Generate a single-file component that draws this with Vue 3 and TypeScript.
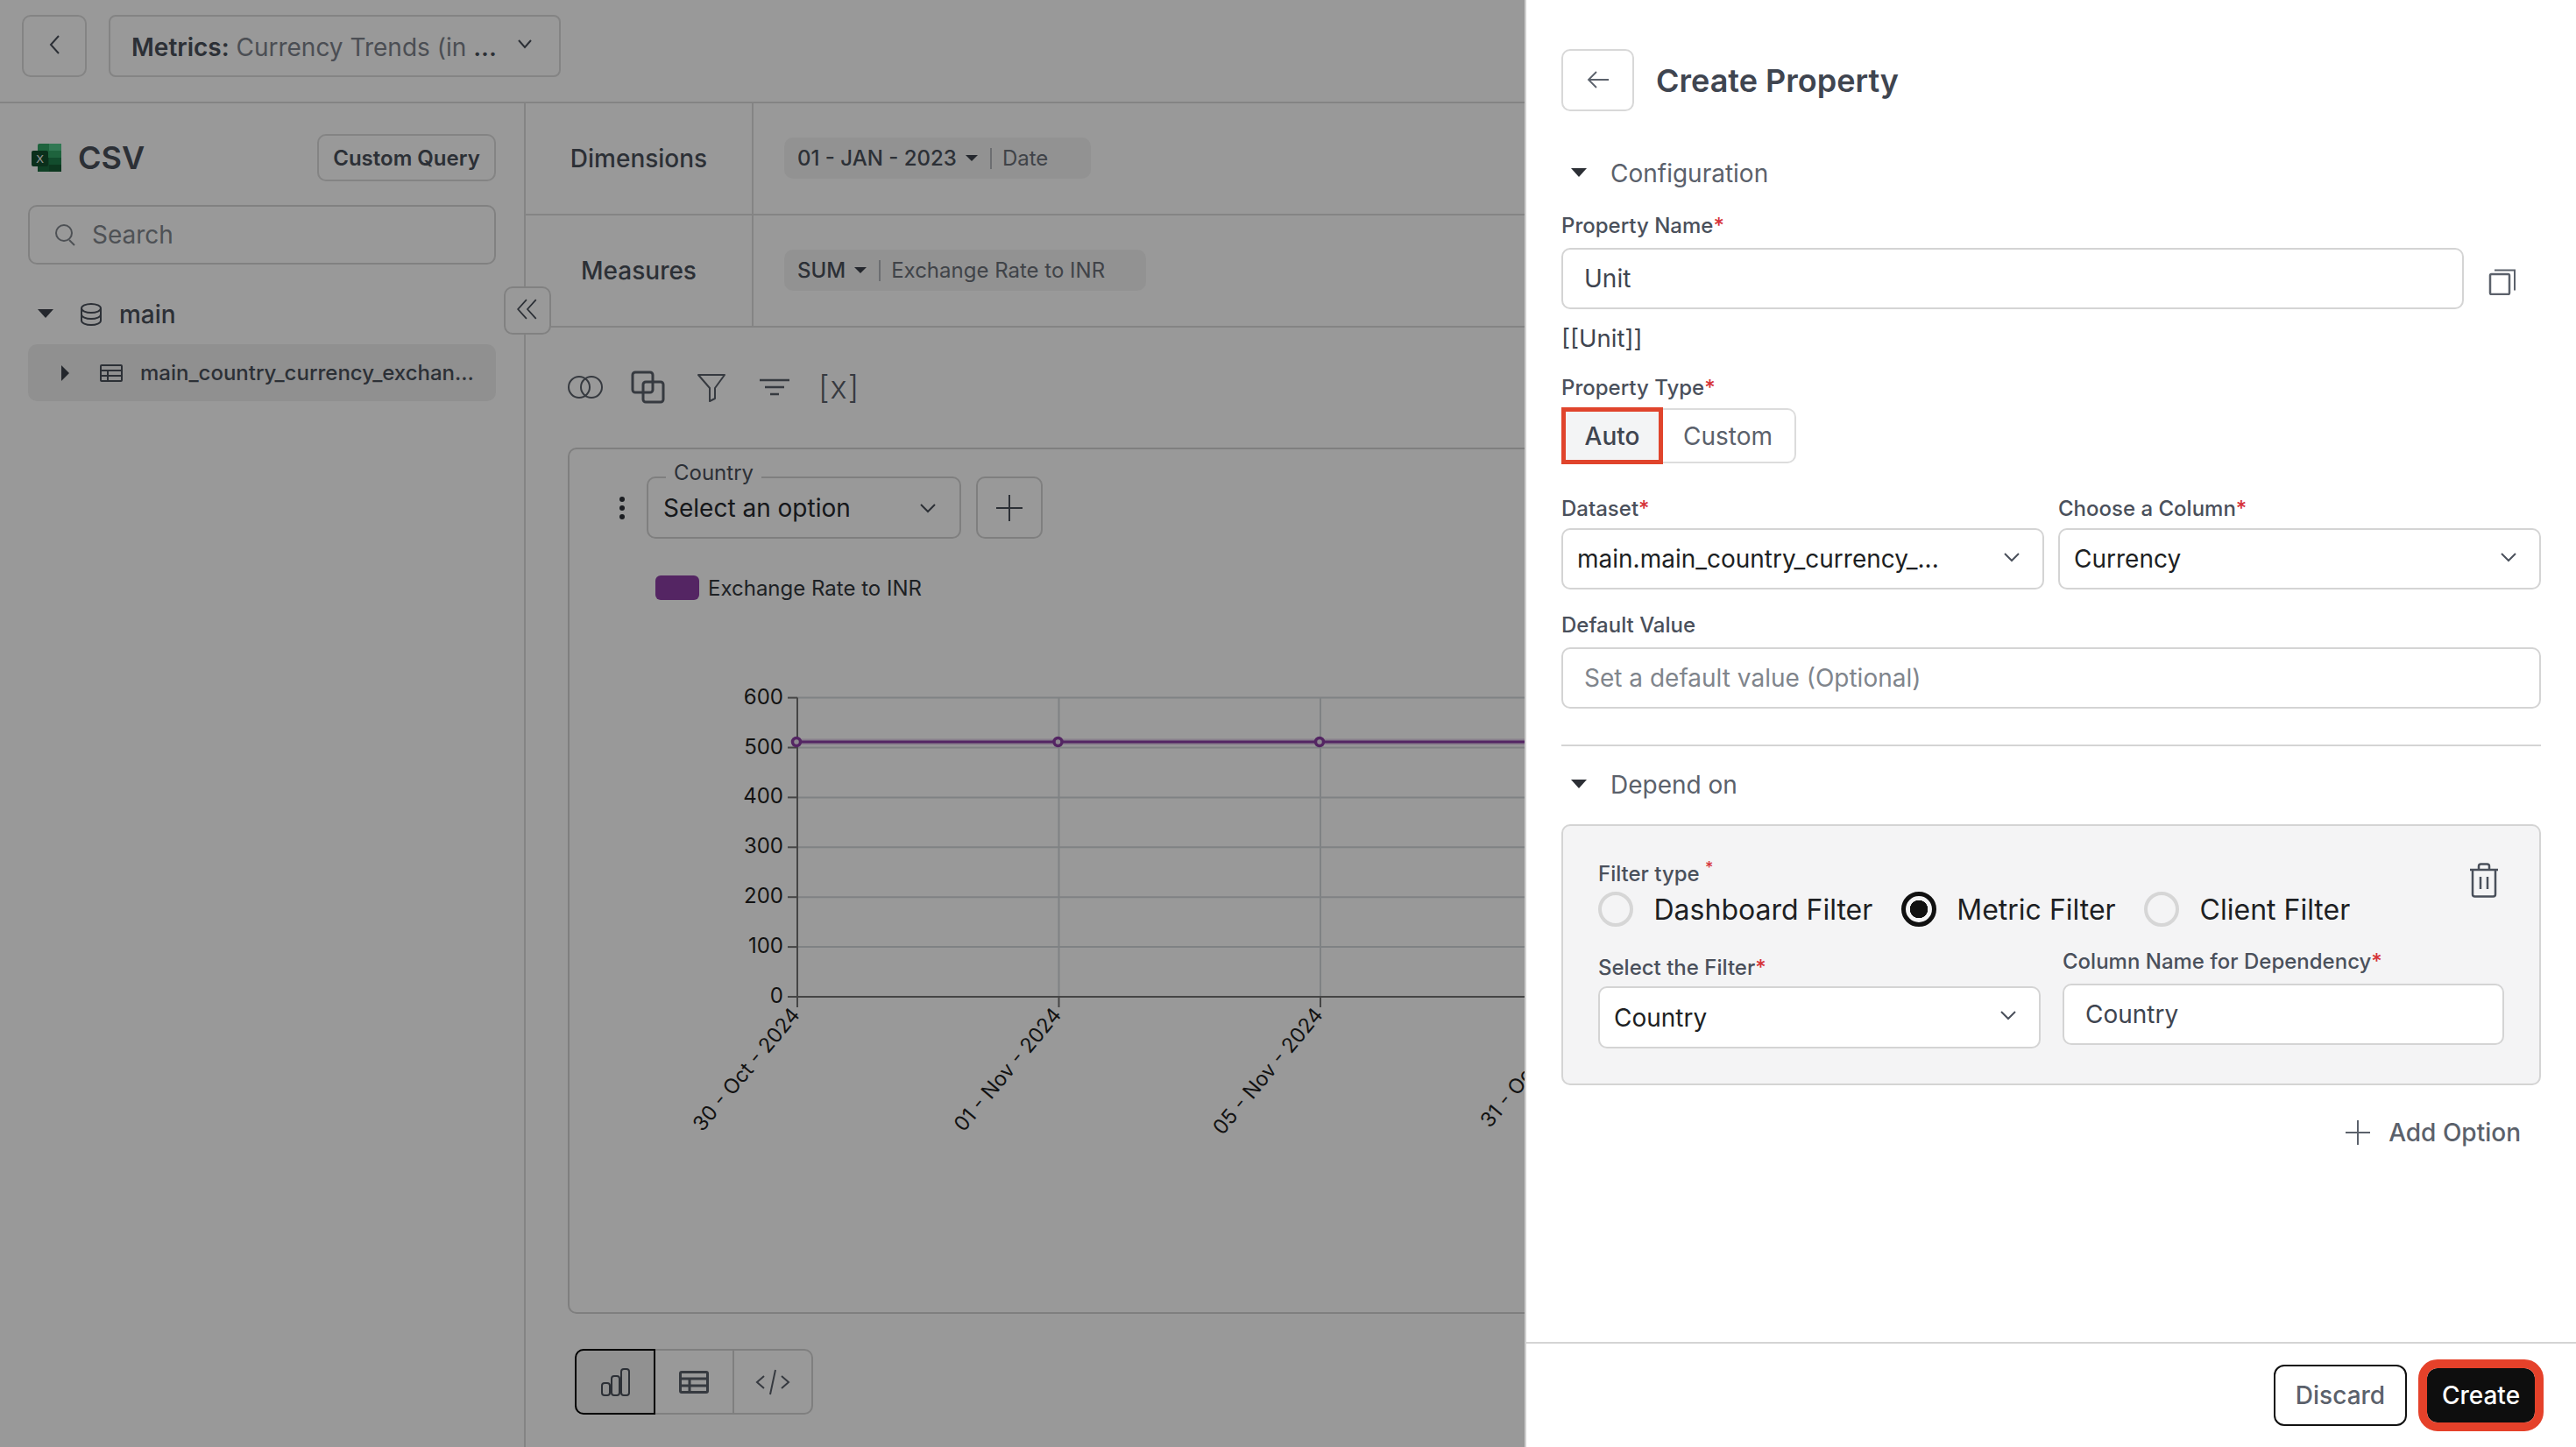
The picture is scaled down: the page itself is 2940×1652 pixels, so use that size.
<template>
  <div class="screen">
    <!-- page behind the drawer -->
    <div class="page">
      <header class="topbar">
        <button class="back-btn">
          <svg width="14" height="26" viewBox="0 0 14 26"><path d="M12 3 3 13l9 10" class="ln" stroke-width="2" /></svg>
        </button>
        <div class="metric-select">
          <span class="metric-text"><b>Metrics:</b> Currency Trends (in <b>...</b></span>
          <svg width="18" height="12" viewBox="0 0 18 12"><path d="m2 2 7 8 7-8" class="ln" stroke-width="2" /></svg>
        </div>
      </header>

      <div class="workspace">
        <aside class="sidebar">
          <div class="source-row">
            <div class="source-name">
              <svg width="34" height="32" viewBox="0 0 34 32">
                <rect x="7" y="0" width="27" height="32" rx="2" fill="#33a566" />
                <rect x="20" y="0" width="14" height="8" fill="#52c98a" />
                <rect x="20" y="8" width="14" height="8" fill="#33a566" />
                <rect x="20" y="16" width="14" height="8" fill="#1f7f4b" />
                <rect x="7" y="16" width="13" height="16" fill="#1a6b3f" />
                <rect x="20" y="24" width="14" height="8" fill="#155c35" />
                <rect x="0" y="8" width="19" height="18" rx="2" fill="#124f2e" />
                <text x="9.5" y="22" text-anchor="middle" class="xl-x">X</text>
              </svg>
              <span class="csv">CSV</span>
            </div>
            <button class="query-btn">Custom Query</button>
          </div>
          <div class="search">
            <svg width="26" height="28" viewBox="0 0 26 28"><circle cx="11" cy="12" r="9" class="ln" stroke-width="2" /><path d="m17 20 6 6" class="ln" stroke-width="2" /></svg>
            <span>Search</span>
          </div>
          <div class="tree-main">
            <i class="caret-down" />
            <svg width="26" height="26" viewBox="0 0 26 26">
              <ellipse cx="13" cy="6" rx="11" ry="5" class="ln" stroke-width="2" />
              <path d="M2 6v14c0 2.800 5 5 11 5s11-2.200 11-5V6M2 13c0 2.800 5 5 11 5s11-2.200 11-5" class="ln" stroke-width="2" />
            </svg>
            <span>main</span>
          </div>
          <div class="tree-table">
            <i class="caret-right" />
            <svg width="26" height="20" viewBox="0 0 26 20">
              <rect x="1" y="1" width="24" height="18" rx="1" class="ln" stroke-width="2" />
              <path d="M1 7h24M1 13h24M9 7v12" class="ln" stroke-width="2" />
            </svg>
            <span>main_country_currency_exchan...</span>
          </div>
        </aside>

        <button class="collapse-btn">
          <svg width="28" height="26" viewBox="0 0 24 24"><path d="M11 2 2 12l9 10M21 2l-9 10 9 10" class="ln" stroke-width="1.600" /></svg>
        </button>

        <main class="content">
          <div class="config-row">
            <div class="config-label">Dimensions</div>
            <div class="config-body">
              <div class="pill pill--date">
                <span class="pill-key">01 - JAN - 2023</span>
                <i class="pill-caret" />
                <span class="pill-sep" />
                <span class="pill-val">Date</span>
              </div>
            </div>
          </div>
          <div class="config-row">
            <div class="config-label">Measures</div>
            <div class="config-body">
              <div class="pill pill--sum">
                <span class="pill-key">SUM</span>
                <i class="pill-caret" />
                <span class="pill-sep" />
                <span class="pill-val">Exchange Rate to INR</span>
              </div>
            </div>
          </div>

          <div class="toolbar">
            <svg width="44" height="36" viewBox="0 0 44 36"><circle cx="15" cy="18" r="12" class="ln" stroke-width="2" /><circle cx="29" cy="18" r="12" class="ln" stroke-width="2" /></svg>
            <svg width="44" height="38" viewBox="0 0 44 38"><rect x="4" y="2" width="23" height="23" rx="3" class="ln" stroke-width="3" /><rect x="16" y="13" width="23" height="23" rx="3" class="ln" stroke-width="3" /></svg>
            <svg width="44" height="36" viewBox="0 0 44 36"><path d="M7 4h30L26 19v12l-6 3V19z" class="ln" stroke-width="2" stroke-linejoin="round" /></svg>
            <svg width="44" height="36" viewBox="0 0 44 36"><path d="M5 10h34M11 18h22M17 26h10" class="ln" stroke-width="2.500" /></svg>
            <span class="var-icon">[x]</span>
          </div>

          <section class="chart-card">
            <div class="filter-row">
              <svg class="dots" width="8" height="28" viewBox="0 0 8 28"><circle cx="4" cy="4" r="3" /><circle cx="4" cy="14" r="3" /><circle cx="4" cy="24" r="3" /></svg>
              <div class="filter-select">
                <span class="filter-legend">Country</span>
                <span>Select an option</span>
                <svg width="20" height="12" viewBox="0 0 20 12"><path d="m2 2 8 8 8-8" class="ln" stroke-width="2" /></svg>
              </div>
              <button class="plus-btn">
                <svg width="30" height="30" viewBox="0 0 30 30"><path d="M15 0v30M0 15h30" class="ln" stroke-width="2" /></svg>
              </button>
            </div>
            <div class="legend"><i class="legend-swatch" /><span>Exchange Rate to INR</span></div>
            <svg class="chart" width="1300" height="620" viewBox="0 0 1300 620">
              <g v-for="t in yTicks" :key="t.label">
                <line v-if="t.label !== '0'" :x1="axisX" :x2="1300" :y1="t.y" :y2="t.y" class="grid" />
                <line :x1="axisX - 11" :x2="axisX" :y1="t.y" :y2="t.y" class="axis" />
                <text :x="axisX - 16" :y="t.y + 7" text-anchor="end" class="tick">{{ t.label }}</text>
              </g>
              <g v-for="t in xTicks" :key="t.label">
                <line v-if="t.x !== axisX" :x1="t.x" :x2="t.x" :y1="axisTop" :y2="axisBottom" class="grid" />
                <line :x1="t.x" :x2="t.x" :y1="axisBottom" :y2="axisBottom + 12" class="axis" />
                <text :x="t.x + 4" :y="axisBottom + 21" text-anchor="end" class="tick tick--x" :transform="`rotate(-50 ${t.x + 4} ${axisBottom + 21})`">{{ t.label }}</text>
              </g>
              <line :x1="axisX" :x2="axisX" :y1="axisTop" :y2="axisBottom" class="axis" />
              <line :x1="axisX" :x2="1300" :y1="axisBottom" :y2="axisBottom" class="axis" />
              <line :x1="axisX" :x2="1300" :y1="lineY" :y2="lineY" class="series-halo" />
              <line :x1="axisX" :x2="1300" :y1="lineY" :y2="lineY" class="series" />
              <circle v-for="t in xTicks" :key="t.label" :cx="t.x - 1" :cy="lineY" r="4.500" class="marker" />
            </svg>
          </section>

          <div class="view-toggle">
            <button class="view-btn view-btn--active">
              <svg width="34" height="32" viewBox="0 0 34 32">
                <rect x="2" y="17" width="9" height="14" rx="3" class="ln" stroke-width="2" />
                <rect x="13" y="9" width="9" height="22" rx="3" class="ln" stroke-width="2" />
                <rect x="24" y="1" width="9" height="30" rx="3" class="ln" stroke-width="2" />
              </svg>
            </button>
            <button class="view-btn">
              <svg width="34" height="26" viewBox="0 0 34 26">
                <rect x="1.500" y="1.500" width="31" height="23" rx="1.500" class="ln" stroke-width="3" />
                <path d="M1 9h32M1 17h32M12 9v16" class="ln" stroke-width="3" />
              </svg>
            </button>
            <button class="view-btn">
              <svg width="40" height="32" viewBox="0 0 40 32"><path d="m10 9-8 7 8 7M30 9l8 7-8 7M23 2l-6 28" class="ln" stroke-width="2" /></svg>
            </button>
          </div>
        </main>
      </div>
    </div>

    <div class="dim" />

    <!-- drawer -->
    <aside class="drawer">
      <div class="drawer-body">
        <div class="drawer-head">
          <button class="drawer-back">
            <svg width="26" height="20" viewBox="0 0 26 20"><path d="M11 1 2 10l9 9M2 10h23" class="ln" stroke-width="1.800" /></svg>
          </button>
          <h1>Create Property</h1>
        </div>

        <div class="section-title section-title--first"><i class="section-caret" />Configuration</div>

        <label class="lbl lbl--name">Property Name<em>*</em></label>
        <div class="name-row">
          <div class="box name-input">Unit</div>
          <svg width="32" height="30" viewBox="0 0 32 30">
            <rect x="2" y="6" width="22" height="23" rx="1.500" class="ln" stroke-width="2.500" />
            <path d="M7 1.500h23v23" class="ln" stroke-width="2" />
          </svg>
        </div>
        <div class="token">[[Unit]]</div>

        <label class="lbl lbl--type">Property Type<em>*</em></label>
        <div class="type-toggle">
          <span class="type-auto">Auto</span>
          <span class="type-custom">Custom</span>
        </div>

        <div class="two-col">
          <div class="col">
            <label class="lbl">Dataset<em>*</em></label>
            <div class="box select"><span>main.main_country_currency_...</span><svg width="20" height="12" viewBox="0 0 20 12"><path d="m2 2 8 8 8-8" class="ln" stroke-width="2" /></svg></div>
          </div>
          <div class="col">
            <label class="lbl">Choose a Column<em>*</em></label>
            <div class="box select"><span>Currency</span><svg width="20" height="12" viewBox="0 0 20 12"><path d="m2 2 8 8 8-8" class="ln" stroke-width="2" /></svg></div>
          </div>
        </div>

        <label class="lbl lbl--default">Default Value</label>
        <div class="box placeholder">Set a default value (Optional)</div>

        <div class="divider" />

        <div class="section-title section-title--depend"><i class="section-caret" />Depend on</div>

        <div class="depend-card">
          <div class="depend-top">
            <div>
              <div class="lbl">Filter type <sup>*</sup></div>
              <div class="radios">
                <template v-for="r in radioOptions" :key="r.label">
                  <span class="radio" :class="{ 'radio--on': r.on }" />
                  <span class="radio-text">{{ r.label }}</span>
                </template>
              </div>
            </div>
            <svg class="trash" width="36" height="40" viewBox="0 0 36 40">
              <path d="M2 8h32M12 8V4c0-1.500 1-2.500 2.500-2.500h7C23 1.500 24 2.500 24 4v4M5 8v28c0 1.500 1 2.500 2.500 2.500h21c1.500 0 2.500-1 2.500-2.500V8M14 16v14M22 16v14" class="ln" stroke-width="2.500" />
            </svg>
          </div>
          <div class="depend-fields">
            <div class="col-filter">
              <label class="lbl">Select the Filter<em>*</em></label>
              <div class="box select select--filter"><span>Country</span><svg width="20" height="12" viewBox="0 0 20 12"><path d="m2 2 8 8 8-8" class="ln" stroke-width="2" /></svg></div>
            </div>
            <div class="col-column">
              <label class="lbl">Column Name for Dependency<em>*</em></label>
              <div class="box column-input">Country</div>
            </div>
          </div>
        </div>

        <div class="add-option">
          <svg width="28" height="28" viewBox="0 0 28 28"><path d="M14 0v28M0 14h28" class="ln" stroke-width="2" /></svg>
          <span>Add Option</span>
        </div>
      </div>

      <footer class="drawer-foot">
        <button class="btn-discard">Discard</button>
        <button class="btn-create">Create</button>
      </footer>
    </aside>
  </div>
</template>

<script setup lang="ts">
const axisX = 260
const axisTop = 98.6
const axisBottom = 440
const lineY = 149

const yTicks = ['0', '100', '200', '300', '400', '500', '600'].map((label, i) => ({
  label,
  y: axisBottom - i * 56.9,
}))

const xTicks = ['30 - Oct - 2024', '01 - Nov - 2024', '05 - Nov - 2024', '31 - Oct - 2024'].map((label, i) => ({
  label,
  x: axisX + i * 298.5,
}))

const radioOptions = [
  { label: 'Dashboard Filter', on: false },
  { label: 'Metric Filter', on: true },
  { label: 'Client Filter', on: false },
]
</script>

<style>
html,
body {
  margin: 0;
  background: #fff;
}
</style>

<style scoped>
.screen {
  position: relative;
  width: 2940px;
  height: 1652px;
  overflow: hidden;
  background: #fff;
  font-family: Inter, "Liberation Sans", sans-serif;
  color: #4a505b;
}

button {
  font-family: inherit;
  padding: 0;
  cursor: pointer;
  background: transparent;
}

.ln {
  fill: none;
  stroke: currentColor;
}

.dim {
  position: absolute;
  inset: 0;
  background: rgba(0, 0, 0, 0.4);
}

.page {
  width: 2940px;
}

.topbar {
  height: 116px;
  box-sizing: content-box;
  border-bottom: 2px solid #dcdcdc;
  display: flex;
  align-items: flex-start;
  gap: 25px;
  padding: 0 0 0 25px;
}

.topbar > * {
  margin-top: 17px;
}

.back-btn {
  width: 74px;
  height: 71px;
  border: 2px solid #dcdcdc;
  border-radius: 10px;
  color: #4a505b;
}

.metric-select {
  width: 516px;
  height: 71px;
  box-sizing: border-box;
  border: 2px solid #dcdcdc;
  border-radius: 8px;
  display: flex;
  align-items: center;
  justify-content: space-between;
  padding: 2px 30px 0 24px;
  font-size: 28px;
  color: #7d838c;
}

.metric-text {
  white-space: nowrap;
}

.metric-text b {
  font-weight: 600;
  color: #4a505b;
}

.metric-select svg {
  color: #4a505b;
  margin-top: -8px;
}

.workspace {
  position: relative;
  display: flex;
  height: 1534px;
}

.sidebar {
  width: 600px;
  box-sizing: border-box;
  border-right: 2px solid #dcdcdc;
  padding: 35px 32px 0 32px;
}

.source-row {
  display: flex;
  justify-content: space-between;
  align-items: center;
  height: 54px;
}

.source-name {
  display: flex;
  align-items: center;
  gap: 19px;
  padding-left: 4px;
}

.xl-x {
  font-size: 13px;
  font-family: "Liberation Sans", sans-serif;
  fill: #fff;
}

.csv {
  font-size: 36px;
  font-weight: 600;
  color: #4a505b;
}

.query-btn {
  width: 204px;
  height: 54px;
  border: 2px solid #dcdcdc;
  border-radius: 10px;
  font-size: 24px;
  font-weight: 600;
  color: #4a505b;
}

.search {
  margin-top: 27px;
  height: 68px;
  box-sizing: border-box;
  border: 2px solid #d8d8d8;
  border-radius: 10px;
  display: flex;
  align-items: center;
  gap: 17px;
  padding-left: 28px;
  font-size: 28px;
  color: #82878e;
}

.tree-main {
  margin-top: 32px;
  height: 50px;
  display: flex;
  align-items: center;
  font-size: 28px;
  font-weight: 500;
  color: #4a505b;
}

.caret-down {
  width: 0;
  height: 0;
  border-left: 9px solid transparent;
  border-right: 9px solid transparent;
  border-top: 10px solid #3d424b;
  margin: -2px 30px 0 11px;
}

.tree-main span {
  margin-left: 19px;
}

.tree-table {
  margin-top: 9px;
  height: 65px;
  border-radius: 10px;
  background: #f1f1f1;
  display: flex;
  align-items: center;
  font-size: 24px;
  font-weight: 500;
  color: #4a505b;
  white-space: nowrap;
}

.caret-right {
  width: 0;
  height: 0;
  border-top: 9px solid transparent;
  border-bottom: 9px solid transparent;
  border-left: 9px solid #3d424b;
  margin: 0 35px 0 38px;
}

.tree-table span {
  margin-left: 20px;
}

.collapse-btn {
  position: absolute;
  left: 575px;
  top: 209px;
  width: 54px;
  height: 55px;
  border: 2px solid #d8d8d8;
  border-radius: 10px;
  background: #fff;
  color: #4a505b;
}

.content {
  flex: 1;
  min-width: 0;
}

.config-row {
  display: flex;
  height: 128px;
  box-sizing: border-box;
  border-bottom: 2px solid #dcdcdc;
}

.config-label {
  width: 260px;
  box-sizing: border-box;
  border-right: 2px solid #dcdcdc;
  display: flex;
  align-items: center;
  justify-content: center;
  font-size: 28px;
  font-weight: 500;
  color: #4a505b;
}

.config-body {
  flex: 1;
  display: flex;
  align-items: center;
  padding: 0 0 1px 35px;
}

.pill {
  height: 47px;
  padding: 0 0 0 15px;
  border-radius: 10px;
  background: #f4f4f4;
  display: flex;
  align-items: center;
  font-size: 24px;
  color: #6b7079;
}

.pill--date {
  padding-right: 49px;
}

.pill--sum {
  padding-right: 47px;
}

.pill-key {
  font-weight: 500;
  color: #4a505b;
}

.pill-caret {
  width: 0;
  height: 0;
  border-left: 7px solid transparent;
  border-right: 7px solid transparent;
  border-top: 7px solid #3d424b;
  margin: 0 14px 0 10px;
}

.pill-sep {
  width: 2px;
  height: 24px;
  background: #b5b8bc;
  margin-right: 12px;
}

.toolbar {
  height: 137px;
  display: flex;
  align-items: center;
  gap: 28px;
  padding: 0 0 1px 46px;
  box-sizing: border-box;
  color: #5b616b;
}

.var-icon {
  width: 44px;
  text-align: center;
  font-size: 36px;
  font-weight: 300;
  letter-spacing: 1px;
  white-space: nowrap;
  color: #5b616b;
}

.chart-card {
  margin-left: 48px;
  width: 2200px;
  height: 989px;
  box-sizing: border-box;
  border: 2px solid #d4d4d4;
  border-radius: 10px;
  padding-top: 31px;
}

.filter-row {
  display: flex;
  align-items: center;
  padding-left: 56px;
}

.dots {
  fill: #2d3138;
  margin-right: 24px;
}

.filter-select {
  position: relative;
  width: 359px;
  height: 71px;
  box-sizing: border-box;
  border: 2px solid #d4d4d4;
  border-radius: 10px;
  display: flex;
  align-items: center;
  justify-content: space-between;
  padding: 0 26px 0 17px;
  font-size: 28px;
  color: #25282d;
}

.filter-select svg {
  color: #4a505b;
}

.filter-legend {
  position: absolute;
  left: 20px;
  top: -19px;
  padding: 0 9px;
  background: #fff;
  font-size: 24px;
  line-height: 26px;
  color: #4a505b;
}

.plus-btn {
  width: 76px;
  height: 71px;
  margin-left: 17px;
  border: 2px solid #d4d4d4;
  border-radius: 10px;
  color: #4a505b;
  display: flex;
  align-items: center;
  justify-content: center;
}

.legend {
  margin: 42px 0 0 98px;
  display: flex;
  align-items: center;
  gap: 10px;
  font-size: 24px;
  color: #33373d;
  height: 28px;
}

.legend-swatch {
  width: 50px;
  height: 28px;
  border-radius: 6px;
  background: #8c3fa6;
}

.chart {
  display: block;
  margin-top: 13px;
  overflow: hidden;
}

.grid {
  stroke: #d4d9dc;
  stroke-width: 2;
}

.axis {
  stroke: #747474;
  stroke-width: 2;
}

.tick {
  font-size: 24px;
  fill: #1f1f1f;
}

.tick--x {
  font-size: 23.500px;
}

.series-halo {
  stroke: #c9a8d6;
  stroke-width: 7;
  opacity: 0.5;
}

.series {
  stroke: #8c3fa6;
  stroke-width: 3;
}

.marker {
  fill: #ece3f0;
  stroke: #8c3fa6;
  stroke-width: 3.500;
}

.view-toggle {
  margin: 40px 0 0 56px;
  width: 272px;
  height: 75px;
  box-sizing: border-box;
  border: 2px solid #d4d4d4;
  border-radius: 10px;
  display: flex;
}

.view-btn {
  flex: 1;
  border: none;
  border-right: 2px solid #d4d4d4;
  color: #5b616b;
  display: flex;
  align-items: center;
  justify-content: center;
}

.view-btn:last-child {
  border-right: none;
}

.view-btn--active {
  flex: none;
  width: 92px;
  height: 75px;
  margin: -2px 0 0 -2px;
  box-sizing: border-box;
  border: 2px solid #000;
  border-radius: 10px 0 0 10px;
  background: #f2f2f2;
  color: #4a505b;
}

/* drawer */
.drawer {
  position: absolute;
  right: 0;
  top: 0;
  bottom: 0;
  width: 1200px;
  box-sizing: border-box;
  border-left: 2px solid #cfcfcf;
  background: #fff;
  display: flex;
  flex-direction: column;
}

.drawer-body {
  flex: 1;
  padding: 56px 40px 0 40px;
  min-height: 0;
}

.drawer-head {
  display: flex;
  align-items: center;
  gap: 25px;
}

.drawer-back {
  width: 83px;
  height: 71px;
  border: 2px solid #d8d8d8;
  border-radius: 10px;
  color: #5b616b;
}

.drawer-back svg {
  margin-top: 2px;
}

.drawer-head h1 {
  margin: 0;
  font-size: 36px;
  font-weight: 600;
  color: #3f4550;
}

.section-title {
  height: 40px;
  display: flex;
  align-items: center;
  font-size: 28px;
  color: #5b616b;
}

.section-title--first {
  margin-top: 51px;
}

.section-title--depend {
  margin-top: 24px;
}

.section-caret {
  width: 0;
  height: 0;
  border-left: 9px solid transparent;
  border-right: 9px solid transparent;
  border-top: 10px solid #2c2f35;
  margin: -2px 27px 0 11px;
}

.lbl {
  display: block;
  height: 30px;
  line-height: 30px;
  font-size: 24px;
  font-weight: 500;
  color: #4a505b;
  white-space: nowrap;
}

.lbl em {
  font-style: normal;
  color: #d6333a;
}

.lbl--name {
  margin-top: 25px;
}

.lbl--type {
  margin-top: 25px;
}

.lbl--default {
  margin-top: 26px;
}

.box {
  height: 70px;
  box-sizing: border-box;
  border: 2px solid #d4d4d4;
  border-radius: 10px;
  background: #fff;
  display: flex;
  align-items: center;
  font-size: 28px;
}

.name-row {
  margin-top: 10px;
  display: flex;
  align-items: flex-start;
}

.name-input {
  width: 1030px;
  padding-left: 24px;
  color: #3f4550;
}

.name-row svg {
  margin: 24px 0 0 28px;
  color: #5b616b;
}

.token {
  margin-top: 16px;
  height: 34px;
  line-height: 34px;
  font-size: 27.500px;
  color: #3f4550;
}

.type-toggle {
  margin-top: 7px;
  width: 268px;
  height: 65px;
  display: flex;
  align-items: center;
  font-size: 28px;
}

.type-auto {
  width: 116px;
  height: 65px;
  box-sizing: border-box;
  border: 5px solid #e0442c;
  background: #f3f4f5;
  display: flex;
  align-items: center;
  justify-content: center;
  font-weight: 500;
  color: #3f4550;
}

.type-custom {
  flex: 1;
  height: 63px;
  box-sizing: border-box;
  border: 2px solid #dcdcdc;
  border-left: none;
  border-radius: 0 10px 10px 0;
  display: flex;
  align-items: center;
  padding-left: 23px;
  color: #5b616b;
}

.two-col {
  margin-top: 36px;
  display: flex;
  gap: 16px;
}

.col {
  width: 551px;
}

.col .box {
  margin-top: 7px;
}

.select {
  justify-content: space-between;
  padding: 0 25px 0 16px;
  color: #1d1f23;
}

.select span {
  white-space: nowrap;
}

.select svg {
  color: #4a505b;
  margin-top: -5px;
}

.placeholder {
  margin-top: 10px;
  padding-left: 24px;
  color: #80858c;
}

.divider {
  margin-top: 41px;
  height: 2px;
  background: #d4d4d4;
}

.depend-card {
  margin-top: 25px;
  height: 298px;
  box-sizing: border-box;
  border: 2px solid #d4d4d4;
  border-radius: 10px;
  background: #f4f4f5;
  padding: 40px 45px 0 40px;
}

.depend-top {
  display: flex;
  justify-content: space-between;
  align-items: flex-start;
}

.lbl sup {
  color: #d6333a;
  font-size: 18px;
  line-height: 0;
}

.radios {
  margin-top: 5px;
  display: flex;
  align-items: center;
}

.radio {
  width: 40px;
  height: 40px;
  box-sizing: border-box;
  border: 4px solid #d6d6d6;
  border-radius: 50%;
  margin-right: 23.500px;
}

.radio--on {
  border: 5px solid #111;
  background: radial-gradient(circle, #111 0 10px, #f4f4f5 10.500px);
}

.radio-text {
  font-size: 32px;
  color: #1d1f23;
  margin-right: 32.500px;
  white-space: nowrap;
}

.trash {
  color: #4a505b;
  margin-top: 2px;
}

.depend-fields {
  display: flex;
  gap: 25px;
  align-items: flex-start;
}

.col-filter {
  flex: none;
  width: 505px;
  margin-top: 32px;
}

.col-filter .box {
  margin-top: 6px;
  height: 71px;
}

.col-column {
  flex: none;
  width: 504px;
  margin-top: 25px;
}

.column-input {
  margin-top: 10px;
  padding-left: 24px;
  color: #3f4550;
}

.add-option {
  margin-top: 34px;
  height: 40px;
  padding-right: 23px;
  display: flex;
  justify-content: flex-end;
  align-items: center;
  gap: 21px;
  font-size: 28px;
  font-weight: 500;
  color: #5b616b;
}

.drawer-foot {
  height: 120px;
  box-sizing: border-box;
  border-top: 2px solid #d4d4d4;
  display: flex;
  justify-content: flex-end;
  align-items: center;
  gap: 13px;
  padding-right: 37px;
}

.btn-discard {
  width: 152px;
  height: 70px;
  border: 2px solid #111;
  border-radius: 12px;
  background: #fff;
  font-size: 28px;
  font-weight: 500;
  color: #5b616b;
}

.btn-create {
  width: 143px;
  height: 82px;
  box-sizing: border-box;
  border: 10px solid #e5412a;
  border-radius: 22px;
  background: #0e0e0e;
  background-clip: padding-box;
  font-size: 28px;
  font-weight: 500;
  color: #fff;
}
</style>
